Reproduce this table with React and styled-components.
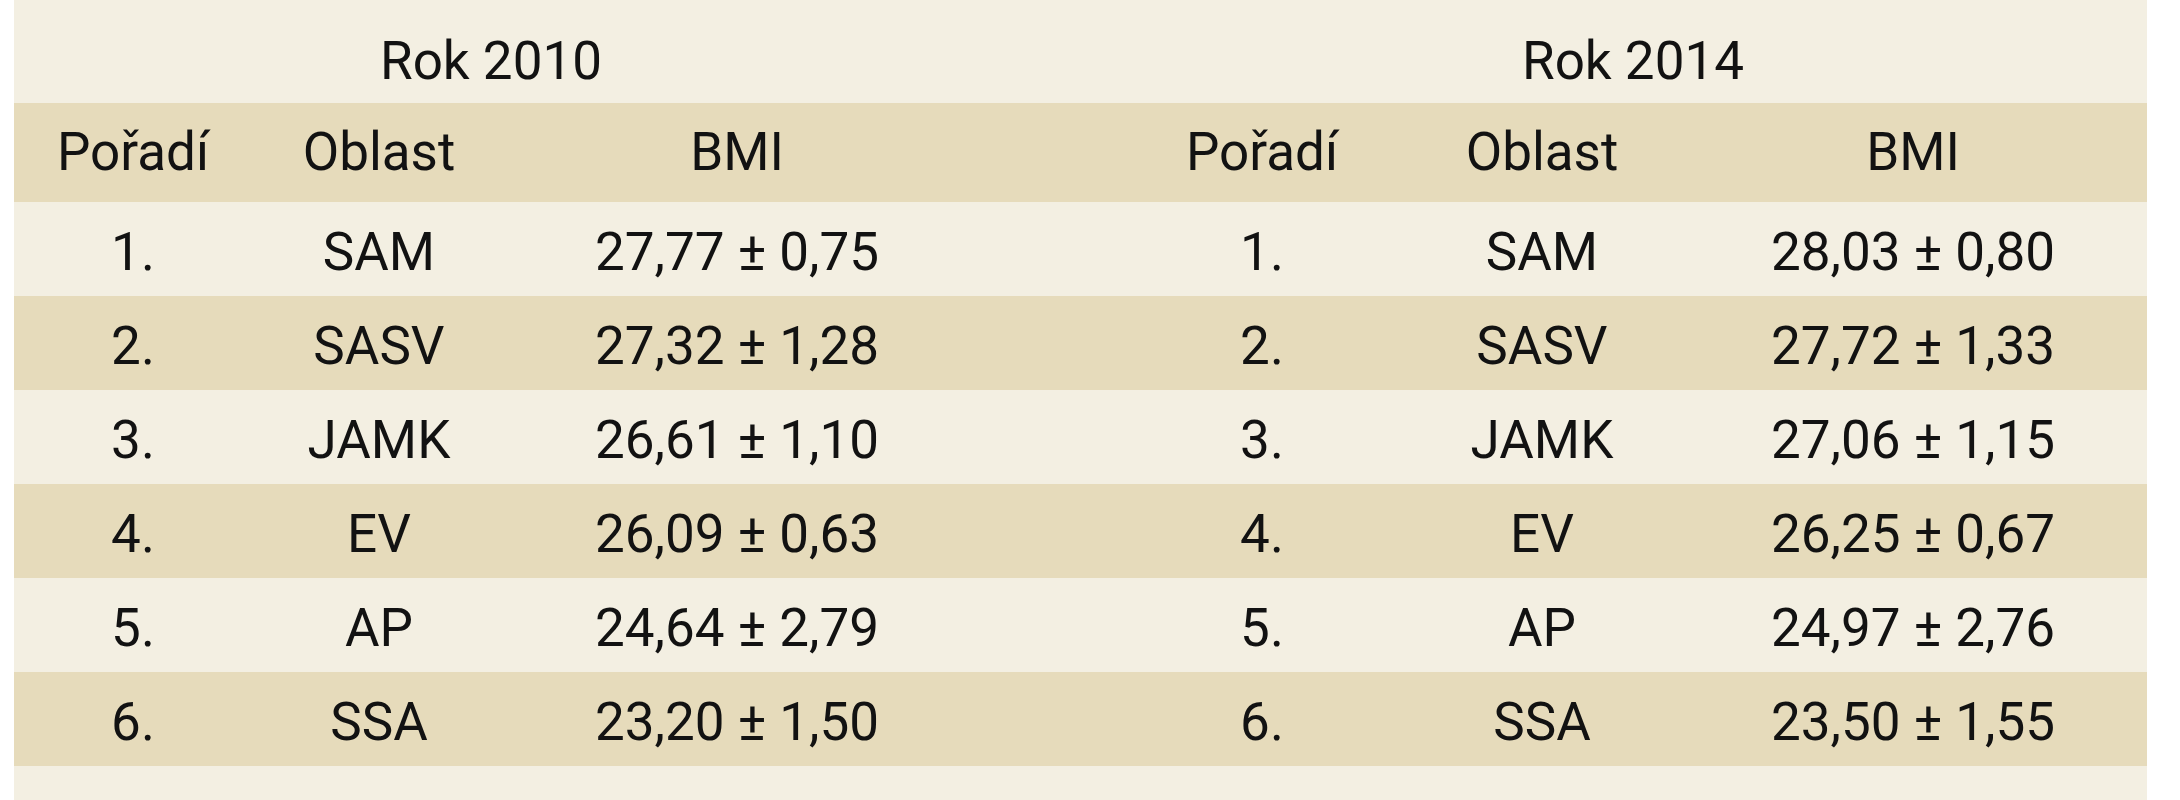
import styled, { createGlobalStyle } from "styled-components";

const GlobalStyle = createGlobalStyle`
  body {
    margin: 0;
    background: #ffffff;
  }
`;

const years = [
  {
    year: "Rok 2010",
    rows: [
      ["1.", "SAM", "27,77 ± 0,75"],
      ["2.", "SASV", "27,32 ± 1,28"],
      ["3.", "JAMK", "26,61 ± 1,10"],
      ["4.", "EV", "26,09 ± 0,63"],
      ["5.", "AP", "24,64 ± 2,79"],
      ["6.", "SSA", "23,20 ± 1,50"],
    ],
  },
  {
    year: "Rok 2014",
    rows: [
      ["1.", "SAM", "28,03 ± 0,80"],
      ["2.", "SASV", "27,72 ± 1,33"],
      ["3.", "JAMK", "27,06 ± 1,15"],
      ["4.", "EV", "26,25 ± 0,67"],
      ["5.", "AP", "24,97 ± 2,76"],
      ["6.", "SSA", "23,50 ± 1,55"],
    ],
  },
];

const headers = ["Pořadí", "Oblast", "BMI"];

const App = () => {
  const [left, right] = years;
  return (
    <>
      <GlobalStyle />
      <Table>
        <Row $height={103} $pad={19}>
          <Title>{left.year}</Title>
          <Spacer />
          <Title>{right.year}</Title>
        </Row>
        <Row $dark $height={99}>
          {headers.map((h) => (
            <Cell key={"l" + h}>{h}</Cell>
          ))}
          <Spacer />
          {headers.map((h) => (
            <Cell key={"r" + h}>{h}</Cell>
          ))}
        </Row>
        {left.rows.map((row, i) => (
          <Row key={i} $dark={i % 2 === 1} $height={94} $pad={6}>
            {row.map((v, j) => (
              <Cell key={"l" + j}>{v}</Cell>
            ))}
            <Spacer />
            {right.rows[i].map((v, j) => (
              <Cell key={"r" + j}>{v}</Cell>
            ))}
          </Row>
        ))}
        <Bottom />
      </Table>
    </>
  );
};

const Table = styled.div`
  margin-left: 14px;
  width: 2133px;
  height: 800px;
  background: #f3efe2;
  font-family: Roboto, "Liberation Sans", sans-serif;
  font-size: 53px;
  color: #121212;
`;

const Row = styled.div`
  display: grid;
  grid-template-columns: 238px 254px 462px 151px 286px 274px 468px;
  align-items: center;
  height: ${(p) => p.$height}px;
  padding-top: ${(p) => p.$pad || 0}px;
  box-sizing: border-box;
  background: ${(p) => (p.$dark ? "#e6dbbb" : "#f3efe2")};
`;

const Cell = styled.div`
  text-align: center;
  line-height: 1;
  white-space: nowrap;
`;

const Title = styled(Cell)`
  grid-column: span 3;
`;

const Spacer = styled.div``;

const Bottom = styled.div`
  height: 34px;
`;

export default App;
